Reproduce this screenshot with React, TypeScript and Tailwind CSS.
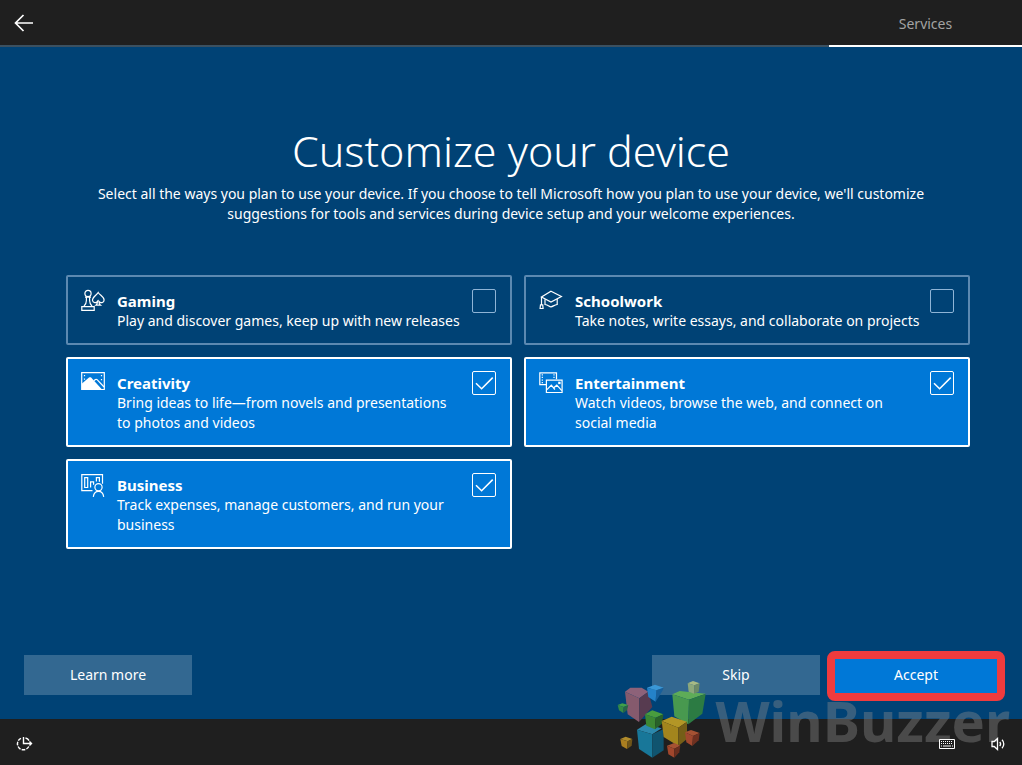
import { useState } from "react";
import type { ReactNode } from "react";
import clsx from "clsx";

type Usage = {
  id: string;
  title: string;
  description: string;
  icon: ReactNode;
};

const iconProps = {
  width: 24,
  height: 24,
  viewBox: "0 0 24 24",
  fill: "none",
  stroke: "currentColor",
  strokeWidth: 1.2,
  "aria-hidden": true,
};

const GamingIcon = () => (
  <svg {...iconProps}>
    <circle cx="7" cy="4.4" r="3.1" />
    <path d="M5.4 7.2v4.2c0 2.6-.8 4-2.4 5.8M8.6 7.2v4.2c0 2.6.8 4 2.4 5.8M4 8.2h6" />
    <path d="M.8 21.4v-3.8h12.4v3.800z" />
    <path d="M17.2 3.500c1.500 2.600 5.900 4.300 5.900 7.400 0 3-3.700 3.700-5.200 1.500 0 1.600.4 2.900 1.600 3.800h-4.600c1.200-.9 1.600-2.200 1.600-3.800-1.300 1.900-4.600 1.600-5-.9-.4-3.400 4.200-5.400 5.700-8z" />
  </svg>
);

const SchoolIcon = () => (
  <svg {...iconProps}>
    <path d="M12 2.3 22.4 7.5 12 13 2.5 8z" />
    <path d="M6 10.2v5.300c3.500.3 4 2.300 6 2.300s3-2 6.200-2.300v-5.600" />
    <path d="M2.5 8v8" />
    <path d="M1.5 15.8h2.200l.4 3.700H1.100z" />
  </svg>
);

const CreativityIcon = () => (
  <svg {...iconProps}>
    <path d="M.7 1.7h22.6v16.8H.7z" />
    <path
      d="M1 12.5 8 6.6c.8-.6 1.4-.6 2.1 0L21 18.5H1z"
      fill="currentColor"
      stroke="none"
    />
    <path d="M12.8 9.8l1.7-1.3c.6-.4 1.1-.3 1.6.2l7 7.3" />
    <path d="M3.500 4v1.200M20.500 4v1.200M20.500 8v1.200M3.500 7.500v1.200" />
  </svg>
);

const EntertainmentIcon = () => (
  <svg {...iconProps}>
    <path d="M7 13.6H.8V1.8h16.7v6.4" />
    <path d="M3.3 3.2v9.4M15 3.2v4" strokeDasharray="1.3 1.3" />
    <path d="M7.4 9.2h15.7v12.3H7.4z" />
    <path d="M8 18.7l4.3-4.6 3.6 4.4M14.5 17l3.3-2.8 5 5.4" />
    <path d="M19.8 11.3h1.2v1.2h-1.2z" />
  </svg>
);

const BusinessIcon = () => (
  <svg {...iconProps}>
    <path d="M11.5 17.6H.8V1.7h20.7v9" />
    <path d="M3.7 4.7h3v9.8h-3zM9.6 14.5V8.8h3v3M15.4 8.6V4.7h3v4" />
    <circle cx="17.5" cy="14.2" r="3.6" />
    <path d="M12.3 23.8c.5-3.6 2.3-5.4 5.2-5.4s4.7 1.8 5.2 5.4" />
  </svg>
);

const usages: Usage[] = [
  {
    id: "gaming",
    title: "Gaming",
    description: "Play and discover games, keep up with new releases",
    icon: <GamingIcon />,
  },
  {
    id: "schoolwork",
    title: "Schoolwork",
    description: "Take notes, write essays, and collaborate on projects",
    icon: <SchoolIcon />,
  },
  {
    id: "creativity",
    title: "Creativity",
    description:
      "Bring ideas to life—from novels and presentations to photos and videos",
    icon: <CreativityIcon />,
  },
  {
    id: "entertainment",
    title: "Entertainment",
    description:
      "Watch videos, browse the web, and connect on social media",
    icon: <EntertainmentIcon />,
  },
  {
    id: "business",
    title: "Business",
    description: "Track expenses, manage customers, and run your business",
    icon: <BusinessIcon />,
  },
];

interface UsageCardProps {
  usage: Usage;
  checked: boolean;
  onToggle: () => void;
}

const UsageCard = ({ usage, checked, onToggle }: UsageCardProps) => (
  <label
    htmlFor={usage.id}
    className={clsx(
      "flex items-start rounded-xs border-2 pt-3 pr-3.5 pb-3 pl-[13px]",
      checked ? "border-white bg-[#0078d7]" : "border-[#5c89b1]"
    )}
  >
    <span className="shrink-0">{usage.icon}</span>
    <span className="mt-0.5 ml-3 min-w-0 flex-1">
      <span className="block text-[15px] font-bold">{usage.title}</span>
      <span className="block">{usage.description}</span>
    </span>
    <span className="relative ml-2.5 size-6 shrink-0">
      <input
        id={usage.id}
        type="checkbox"
        checked={checked}
        onChange={onToggle}
        className={clsx(
          "block size-6 appearance-none rounded-xs border",
          checked ? "border-white" : "border-[#8fb4d6]"
        )}
      />
      {checked && (
        <svg
          viewBox="0 0 24 24"
          className="pointer-events-none absolute inset-0 size-6"
          fill="none"
          stroke="white"
          strokeWidth="1.5"
          aria-hidden
        >
          <path d="M4 12.3l5.600 5.500L20.700 6.600" />
        </svg>
      )}
    </span>
  </label>
);

// Logo blocks, each as its top, left and right faces
const cubes = [
  {
    faces: ["M42 50 58 38 92 38 112 50 85 70z", "M42 50 85 70 84 141 50 118z", "M85 70 112 50 124 96 84 141z"],
    colors: ["#8d6279", "#855a6d", "#573b50"],
  },
  {
    faces: ["M108 38 132 29 158 38 136 46z", "M108 38 136 46 134 80 112 66z", "M136 46 158 38 154 48 134 80z"],
    colors: ["#3a97d6", "#2482c9", "#175f9b"],
  },
  {
    faces: ["M20 90 34 85 52 90 38 96z", "M20 90 38 96 37 114 24 106z", "M38 96 52 90 48 106 37 114z"],
    colors: ["#40a049", "#348a45", "#276546"],
  },
  {
    faces: ["M184 58 206 48 284 56 234 74z", "M184 58 234 74 232 148 190 124z", "M234 74 284 56 274 116 232 148z"],
    colors: ["#5eac58", "#48994f", "#2c7b43"],
  },
  {
    faces: ["M230 25 246 18 266 25 250 31z", "M230 25 250 31 249 56 233 50z", "M250 31 266 25 263 50 249 56z"],
    colors: ["#a7ba85", "#8ca87b", "#6d8a67"],
  },
  {
    faces: ["M78 164 104 148 152 160 124 178z", "M78 164 124 178 124 248 84 222z", "M124 178 158 162 158 226 124 248z"],
    colors: ["#2c88ac", "#187799", "#10546f"],
  },
  {
    faces: ["M102 118 124 106 157 118 134 128z", "M102 118 134 128 132 163 106 152z", "M134 128 157 118 153 146 132 163z"],
    colors: ["#499c3e", "#3c8733", "#286129"],
  },
  {
    faces: ["M152 138 182 125 228 140 202 158z", "M152 138 202 158 202 213 158 186z", "M202 158 228 140 228 192 202 213z"],
    colors: ["#b39626", "#a3851d", "#755e17"],
  },
  {
    faces: ["M28 192 44 185 64 192 50 199z", "M28 192 50 199 48 222 32 213z", "M50 199 64 192 62 212 48 222z"],
    colors: ["#b18c2c", "#aa7e20", "#6e5419"],
  },
  {
    faces: ["M222 172 240 165 266 174 246 183z", "M222 172 246 183 244 213 226 202z", "M246 183 266 174 263 196 244 213z"],
    colors: ["#a65233", "#a0482e", "#6f3020"],
  },
  {
    faces: ["M168 212 190 204 208 212 190 221z", "M168 212 190 221 190 248 172 238z", "M190 221 208 212 205 232 190 248z"],
    colors: ["#a65233", "#a0462c", "#6b2e1e"],
  },
];

const Watermark = () => (
  <div className="pointer-events-none absolute right-3 bottom-0 flex items-end">
    <svg
      width="110"
      height="90"
      viewBox="0 0 330 270"
      className="-mr-1.5"
      aria-hidden
    >
      {cubes.map(({ faces, colors }) => (
        <g key={faces[0]}>
          {faces.map((d, i) => (
            <path key={d} d={d} fill={colors[i]} />
          ))}
        </g>
      ))}
    </svg>
    <span className="mb-3 text-[56px] leading-[66px] font-bold text-[#8c8c8c]/40">
      WinBuzzer
    </span>
  </div>
);

const App = () => {
  const [selected, setSelected] = useState<string[]>([
    "creativity",
    "entertainment",
    "business",
  ]);

  const toggle = (id: string) =>
    setSelected((prev) =>
      prev.includes(id) ? prev.filter((s) => s !== id) : [...prev, id]
    );

  return (
    <div className="relative flex min-h-screen flex-col bg-[#004275] font-['Noto_Sans','Open_Sans',sans-serif] text-[14px] leading-5 text-white">
      <header className="flex h-[47px] items-stretch justify-between bg-[#1f1f1f]">
        <div className="flex flex-1 items-center border-b-2 border-[#3b5060] pl-3.5">
          <button type="button" aria-label="Back">
            <svg
              width="20"
              height="20"
              viewBox="0 0 20 20"
              fill="none"
              stroke="white"
              strokeWidth="1.7"
              aria-hidden
            >
              <path d="M19 10H1.5M9.5 2l-8 8 8 8" />
            </svg>
          </button>
        </div>
        <div className="flex w-[193px] items-center justify-center border-b-2 border-white pt-0.5 text-[#a3a3a3]">
          Services
        </div>
      </header>

      <main className="flex flex-1 flex-col">
        <div className="px-20 pt-[74px] text-center">
          <h1 className="pb-[3px] text-[43px] leading-[60px] font-light">
            Customize your device
          </h1>
          <p>
            Select all the ways you plan to use your device. If you choose to
            tell Microsoft how you plan to use your device, we'll customize
            suggestions for tools and services during device setup and your
            welcome experiences.
          </p>
        </div>

        <div className="mt-[51px] mr-[52px] ml-[66px] grid grid-cols-2 gap-3">
          {usages.map((usage) => (
            <UsageCard
              key={usage.id}
              usage={usage}
              checked={selected.includes(usage.id)}
              onToggle={() => toggle(usage.id)}
            />
          ))}
        </div>

        <div className="mt-auto flex gap-3 pt-6 pr-[22px] pb-6 pl-6">
          <button type="button" className="mr-auto h-10 w-[168px] bg-[#336891]">
            Learn more
          </button>
          <button type="button" className="h-10 w-[168px] bg-[#336891]">
            Skip
          </button>
          <div className="relative z-10">
            <button type="button" className="h-10 w-[168px] bg-[#0078d7]">
              Accept
            </button>
            <div className="pointer-events-none absolute -inset-x-[5px] -top-1 -bottom-1.5 rounded-lg border-8 border-[#ef3b3e]" />
          </div>
        </div>
      </main>

      <footer className="flex h-[46px] items-center bg-[#1f1f1f] px-4 pt-1">
        <button type="button" aria-label="Ease of access" className="mr-auto">
          <svg
            width="17"
            height="16"
            viewBox="0 0 17 16"
            fill="none"
            stroke="white"
            strokeWidth="1.4"
            aria-hidden
          >
            <path
              d="M5 2.3A6 6 0 1 0 12.8 10.5"
              strokeDasharray="3.6 1.2"
            />
            <path d="M9.5 2c1.7.3 2.8 1.2 3.5 2.6" />
            <path d="M7.5 1v6.5h8M13.5 5.5l2 2-2 2" />
          </svg>
        </button>
        <button
          type="button"
          aria-label="Keyboard"
          className="relative z-10 mr-9"
        >
          <svg width="16" height="10" viewBox="0 0 16 10" aria-hidden>
            <path d="M.5.5h15v9H.5z" fill="#1f1f1f" stroke="white" />
            <path
              d="M2 2.5h12M2 4.5h12"
              stroke="white"
              strokeDasharray="1 1"
            />
            <path d="M2 7h1M4 7h8M13 7h1" stroke="white" />
          </svg>
        </button>
        <button type="button" aria-label="Volume" className="relative z-10">
          <svg
            width="15"
            height="14"
            viewBox="0 0 15 14"
            fill="none"
            stroke="white"
            strokeWidth="1.3"
            aria-hidden
          >
            <path d="M1 4.5h2.2L6.5 1.5v11L3.2 9.5H1z" />
            <path d="M8.7 5c1 1.1 1 2.9 0 4" />
            <path d="M11 2.8c2.4 2.4 2.4 6 0 8.4" />
          </svg>
        </button>
      </footer>

      <Watermark />
    </div>
  );
};

export default App;
